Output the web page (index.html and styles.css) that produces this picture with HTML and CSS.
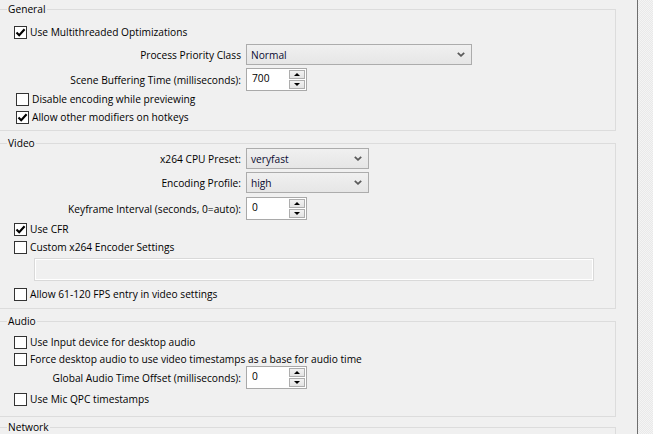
FILE: index.html
```html
<!DOCTYPE html>
<html lang="en">
<head>
<meta charset="utf-8">
<title>Advanced Settings</title>
<link rel="stylesheet" href="styles.css">
</head>
<body>
<div class="window">
  <div class="pane">

    <section class="group group-general">
      <span class="legend">General</span>
      <label class="check row-multi"><span class="box on"><svg viewBox="0 0 11 11"><path d="M1.5 5.5 L4.2 8.3 L9.6 2.2" /></svg></span>Use Multithreaded Optimizations</label>
      <div class="field row-priority">
        <span class="caption">Process Priority Class</span>
        <div class="combo w-wide"><span>Normal</span><svg class="chev" viewBox="0 0 8 5"><path d="M0.8 0.8 L4 3.8 L7.2 0.8" /></svg></div>
      </div>
      <div class="field row-buffer">
        <span class="caption">Scene Buffering Time (milliseconds):</span>
        <div class="spin"><span class="val">700</span><span class="btns"><span class="btn"><i class="up"></i></span><span class="btn"><i class="down"></i></span></span></div>
      </div>
      <label class="check row-disable shift"><span class="box"></span>Disable encoding while previewing</label>
      <label class="check row-mods shift"><span class="box on"><svg viewBox="0 0 11 11"><path d="M1.5 5.5 L4.2 8.3 L9.6 2.2" /></svg></span>Allow other modifiers on hotkeys</label>
    </section>

    <section class="group group-video">
      <span class="legend">Video</span>
      <div class="field row-preset">
        <span class="caption">x264 CPU Preset:</span>
        <div class="combo w-narrow"><span>veryfast</span><svg class="chev" viewBox="0 0 8 5"><path d="M0.8 0.8 L4 3.8 L7.2 0.8" /></svg></div>
      </div>
      <div class="field row-profile">
        <span class="caption">Encoding Profile:</span>
        <div class="combo w-narrow"><span>high</span><svg class="chev" viewBox="0 0 8 5"><path d="M0.8 0.8 L4 3.8 L7.2 0.8" /></svg></div>
      </div>
      <div class="field row-keyint">
        <span class="caption">Keyframe Interval (seconds, 0=auto):</span>
        <div class="spin"><span class="val">0</span><span class="btns"><span class="btn"><i class="up"></i></span><span class="btn"><i class="down"></i></span></span></div>
      </div>
      <label class="check row-cfr"><span class="box on"><svg viewBox="0 0 11 11"><path d="M1.5 5.5 L4.2 8.3 L9.6 2.2" /></svg></span>Use CFR</label>
      <label class="check row-custom"><span class="box"></span>Custom x264 Encoder Settings</label>
      <div class="textbox row-settings"></div>
      <label class="check row-fps"><span class="box"></span>Allow 61-120 FPS entry in video settings</label>
    </section>

    <section class="group group-audio">
      <span class="legend">Audio</span>
      <label class="check row-input"><span class="box"></span>Use Input device for desktop audio</label>
      <label class="check row-force"><span class="box"></span>Force desktop audio to use video timestamps as a base for audio time</label>
      <div class="field row-offset">
        <span class="caption">Global Audio Time Offset (milliseconds):</span>
        <div class="spin"><span class="val">0</span><span class="btns"><span class="btn"><i class="up"></i></span><span class="btn"><i class="down"></i></span></span></div>
      </div>
      <label class="check row-qpc"><span class="box"></span>Use Mic QPC timestamps</label>
    </section>

    <section class="group group-network">
      <span class="legend">Network</span>
    </section>

  </div>
  <div class="scrolltrack"></div>
</div>
</body>
</html>
```
FILE: styles.css
```css
html, body {
  margin: 0;
  padding: 0;
  background: #f0f0f0;
}

body {
  font-family: "Open Sans", "Noto Sans", sans-serif;
  font-size: 10.2px;
  color: #000;
  overflow: hidden;
}

.window {
  display: flex;
  width: 653px;
  height: 434px;
  overflow: hidden;
}

.pane {
  width: 637px;
  flex: none;
  display: flex;
  flex-direction: column;
}

.scrolltrack {
  flex: 1;
  border-left: 1px solid #6e6e6e;
  background-color: #f4f4f4;
  background-image: conic-gradient(#e9e9e9 25%, transparent 0 50%, #e9e9e9 0 75%, transparent 0);
  background-size: 2px 2px;
}

/* group boxes */
.group {
  position: relative;
  flex: none;
  width: 618px;
  margin-left: -2px;
  border: 1px solid #dcdcdc;
  box-sizing: border-box;
  display: flex;
  flex-direction: column;
  align-items: flex-start;
}

.legend {
  position: absolute;
  left: 8px;
  top: -7px;
  padding: 0 1px;
  line-height: 13px;
  background: #f0f0f0;
}

.group-general { margin-top: 9px; height: 122px; }
.group-video   { margin-top: 12px; height: 166px; }
.group-audio   { margin-top: 12px; height: 96px; }
.group-network { margin-top: 10px; height: 20px; }

/* checkboxes */
.check {
  display: flex;
  align-items: center;
  height: 13px;
  line-height: 13px;
  margin-left: 15px;
  white-space: nowrap;
}

.check.shift { margin-left: 17px; }

.box {
  width: 13px;
  height: 13px;
  box-sizing: border-box;
  border: 1px solid #333;
  background: #fff;
  margin-right: 3px;
  flex: none;
  display: flex;
}

.box svg {
  width: 11px;
  height: 11px;
  fill: none;
  stroke: #000;
  stroke-width: 2.1;
}

/* caption + control rows */
.field {
  display: flex;
  align-items: center;
  white-space: nowrap;
}

.caption {
  width: 242px;
  margin-right: 5px;
  text-align: right;
  flex: none;
}

.combo {
  height: 21px;
  box-sizing: border-box;
  border: 1px solid #acacac;
  background: linear-gradient(#f0f0f0, #e6e6e6);
  display: flex;
  align-items: center;
  justify-content: space-between;
  padding: 0 6px 0 4px;
  color: #0a0a30;
}

.w-wide { width: 226px; }
.w-narrow { width: 123px; }

.chev {
  width: 8px;
  height: 5px;
  fill: none;
  stroke: #5a5a5a;
  stroke-width: 1.8;
}

.spin {
  width: 61px;
  height: 23px;
  box-sizing: border-box;
  border: 1px solid #a9a9a9;
  background: #fff;
  display: flex;
  align-items: center;
  justify-content: space-between;
  padding: 0 1px 0 5px;
}

.val { line-height: 13px; margin-top: -3px; }

.btns {
  display: flex;
  flex-direction: column;
  gap: 1px;
}

.btn {
  width: 16px;
  height: 9px;
  box-sizing: border-box;
  border: 1px solid #adadad;
  background: linear-gradient(#f2f2f2, #e3e3e3);
  display: flex;
  align-items: center;
  justify-content: center;
}

.btn i {
  width: 0;
  height: 0;
  border-left: 3px solid transparent;
  border-right: 3px solid transparent;
}

.btn .up { border-bottom: 3px solid #000; }
.btn .down { border-top: 3px solid #000; }

.textbox {
  width: 560px;
  height: 23px;
  box-sizing: border-box;
  margin-left: 35px;
  border: 1px solid #d9d9d9;
  box-shadow: inset 0 0 0 1px #fff;
}

/* vertical rhythm inside each group */
.row-multi    { margin-top: 16px; }
.row-priority { margin-top: 5px; }
.row-buffer   { margin-top: 3px; }
.row-disable  { margin-top: 2px; }
.row-mods     { margin-top: 5px; }

.row-preset   { margin-top: 4px; }
.row-profile  { margin-top: 3px; }
.row-keyint   { margin-top: 4px; }
.row-cfr      { margin-top: 3px; }
.row-custom   { margin-top: 5px; }
.row-settings { margin-top: 4px; }
.row-fps      { margin-top: 7px; }

.row-input    { margin-top: 14px; }
.row-force    { margin-top: 4px; }
.row-offset   { margin-top: 0; }
.row-qpc      { margin-top: 4px; }
```
